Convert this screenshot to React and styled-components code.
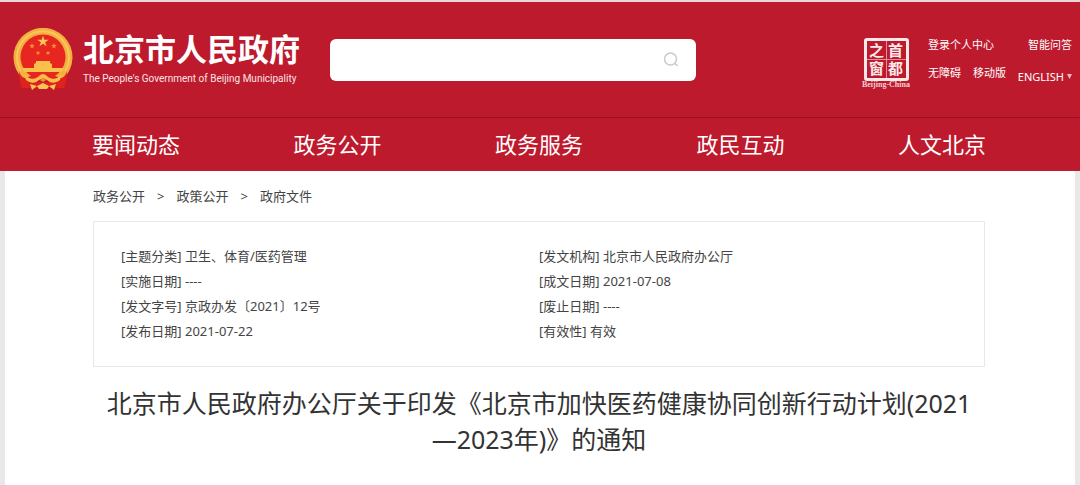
import styled, { createGlobalStyle } from "styled-components"

const navItems = ["要闻动态", "政务公开", "政务服务", "政民互动", "人文北京"]
const crumbs = ["政务公开", "政策公开", "政府文件"]

const infoColumns = [
    [
        { label: "主题分类", value: "卫生、体育/医药管理" },
        { label: "实施日期", value: "----" },
        { label: "发文字号", value: "京政办发〔2021〕12号" },
        { label: "发布日期", value: "2021-07-22" },
    ],
    [
        { label: "发文机构", value: "北京市人民政府办公厅" },
        { label: "成文日期", value: "2021-07-08" },
        { label: "废止日期", value: "----" },
        { label: "有效性", value: "有效" },
    ],
]

const starPoints = (cx, cy, r) => {
    const points = []
    for (let i = 0; i < 10; i++) {
        const radius = i % 2 === 0 ? r : r * 0.38
        const angle = (Math.PI / 5) * i - Math.PI / 2
        points.push(`${(cx + radius * Math.cos(angle)).toFixed(2)},${(cy + radius * Math.sin(angle)).toFixed(2)}`)
    }
    return points.join(" ")
}

function Emblem(){
    return(
        <svg width="62" height="64" viewBox="0 0 62 64" aria-hidden="true">
            {/* 麦穗圈 */}
            <circle cx="31" cy="29" r="24" fill="#e6261f" />
            <path d="M11 51 A29.5 29.5 0 1 1 51 51 L43 48 A22.5 22.5 0 1 0 19 48 Z" fill="#f3b03f" />
            <path d="M9 43 A26 26 0 1 1 53 43" fill="none" stroke="#f9c65c" strokeWidth="2" />
            <polygon points={starPoints(31, 13.5, 6)} fill="#fbc552" />
            <polygon points={starPoints(20, 18, 3)} fill="#f4953d" />
            <polygon points={starPoints(42, 18, 3)} fill="#f4953d" />
            <polygon points={starPoints(26, 25, 2.6)} fill="#f4953d" />
            <polygon points={starPoints(36, 25, 2.6)} fill="#f4953d" />
            {/* 天安门 */}
            <path d="M24 33 L38 33 L38 35 L40 36 L40 40 L52 40 L50 44 L12 44 L10 40 L22 40 L22 36 L24 35 Z" fill="#f9c04c" />
            {/* 红绸 */}
            <path d="M7 43 C8 48 12 51 17 51 L19 60 L10 60 C8 55 7 50 7 43 Z" fill="#df221e" />
            <path d="M55 43 C54 48 50 51 45 51 L43 60 L52 60 C54 55 55 50 55 43 Z" fill="#df221e" />
            <path d="M17 54 H45 L42 60 H20 Z" fill="#df221e" />
            {/* 齿轮 */}
            <path d="M12 46 C18 52 23 52 27 48 Q31 44 35 48 C39 52 44 52 50 46 L48 52 C43 56 38 55 35 52 Q31 49 27 52 C24 55 19 56 14 52 Z" fill="#f8bd4a" />
            <path d="M28 52 Q31 49 34 52 L31 54 Z" fill="#ef8e35" />
            <path d="M18 56 L25 58 L20 62 Z M44 56 L37 58 L42 62 Z M25 58 L31 55 L37 58 L35 61 L27 61 Z" fill="#fbc653" />
        </svg>
    )
}

export default function App(){
    return(
        <>
            <GlobalStyle />
            <Page>
                <Header>
                    <Brand href="#">
                        <Emblem />
                        <BrandText>
                            <BrandName>北京市人民政府</BrandName>
                            <BrandSub>The People's Government of Beijing Municipality</BrandSub>
                        </BrandText>
                    </Brand>
                    <Search onSubmit={(e)=>e.preventDefault()}>
                        <input type="text" aria-label="搜索" />
                        <button type="submit" aria-label="搜索">
                            <svg width="18" height="18" viewBox="0 0 18 18" fill="none" stroke="#c9c9c9" strokeWidth="1.5" strokeLinecap="round">
                                <circle cx="8.5" cy="8" r="6" />
                                <path d="M12.5 12.5 L15.5 14.5" />
                            </svg>
                        </button>
                    </Search>
                    <Capital href="#">
                        <Seal>
                            <span>之</span>
                            <span>首</span>
                            <span>窗</span>
                            <span>都</span>
                        </Seal>
                        <SealCaption>Beijing-China</SealCaption>
                    </Capital>
                    <Tools>
                        <ToolRow>
                            <a href="#">登录个人中心</a>
                            <a href="#">智能问答</a>
                        </ToolRow>
                        <ToolRow>
                            <ToolGroup>
                                <a href="#">无障碍</a>
                                <a href="#">移动版</a>
                            </ToolGroup>
                            <Language type="button">
                                ENGLISH
                                <svg width="5" height="5" viewBox="0 0 5 5"><path d="M0 0 H5 L2.5 5 Z" fill="#f3b9bf" /></svg>
                            </Language>
                        </ToolRow>
                    </Tools>
                </Header>
                <Nav>
                    {navItems.map((item)=>(
                        <a key={item} href="#">{item}</a>
                    ))}
                </Nav>
                <Content>
                    <Breadcrumb>
                        {crumbs.map((crumb,index)=>(
                            <li key={crumb}>
                                {index > 0 && <span>&gt;</span>}
                                <a href="#">{crumb}</a>
                            </li>
                        ))}
                    </Breadcrumb>
                    <InfoBox>
                        {infoColumns.map((column,index)=>(
                            <InfoList key={index}>
                                {column.map((info)=>(
                                    <li key={info.label}>[{info.label}] {info.value}</li>
                                ))}
                            </InfoList>
                        ))}
                    </InfoBox>
                    <Title>北京市人民政府办公厅关于印发《北京市加快医药健康协同创新行动计划(2021—2023年)》的通知</Title>
                </Content>
            </Page>
        </>
    )
}

const GlobalStyle = createGlobalStyle`
    *{
        box-sizing: border-box;
    }
    body{
        margin: 0;
        background: #fff;
        font-family: "Noto Sans", "Noto Sans CJK SC", sans-serif;
        color: #444;
    }
    a{
        color: inherit;
        text-decoration: none;
    }
    ul, ol{
        list-style: none;
        margin: 0;
        padding: 0;
    }
`

const Page = styled.div`
    display: flex;
    flex-direction: column;
    min-height: 100vh;
    border-top: 2px solid #ecd5d6;
`

const Header = styled.header`
    display: flex;
    align-items: center;
    height: 115px;
    padding: 0 8px 0 12px;
    background: #bd1a2d;
    color: #fff;
`

const Brand = styled.a`
    display: flex;
    align-items: center;
    gap: 9px;
    flex: 0 0 318px;
`

const BrandText = styled.div`
    display: flex;
    flex-direction: column;
    gap: 4px;
    padding-bottom: 2px;
    white-space: nowrap;
`

const BrandName = styled.strong`
    font-size: 31px;
    line-height: 36px;
    font-weight: 700;
`

const BrandSub = styled.span`
    font-family: Roboto, "Noto Sans", sans-serif;
    font-size: 10px;
    line-height: 16px;
    color: #fbe4e6;
`

const Search = styled.form`
    display: flex;
    flex: 1 1 366px;
    height: 42px;
    min-width: 0;
    border-radius: 6px;
    background: #fff;
    overflow: hidden;
    input{
        flex: 1;
        min-width: 0;
        border: 0;
        padding: 0 12px;
        font-size: 14px;
        outline: none;
        background: transparent;
    }
    button{
        display: flex;
        align-items: center;
        justify-content: center;
        width: 50px;
        padding: 0;
        border: 0;
        background: transparent;
        cursor: pointer;
    }
`

const Capital = styled.a`
    display: flex;
    flex-direction: column;
    align-items: center;
    width: 50px;
    margin: 7px 17px 0 165px;
`

const Seal = styled.div`
    display: grid;
    grid-template-columns: 1fr 1fr;
    gap: 1px;
    width: 45px;
    height: 43px;
    padding: 1px;
    border: 3px solid #fbe9ea;
    border-radius: 3px;
    background: linear-gradient(#e58f98, #e58f98) center / 1px 100% no-repeat,
        linear-gradient(#e58f98, #e58f98) center / 100% 1px no-repeat;
    span{
        display: flex;
        align-items: center;
        justify-content: center;
        font-size: 15px;
        line-height: 16px;
        font-weight: 700;
        color: #fbe9ea;
    }
`

const SealCaption = styled.span`
    font-family: "Liberation Serif", serif;
    font-size: 8px;
    line-height: 8px;
    font-weight: 700;
    white-space: nowrap;
    color: #f6cfd3;
`

const Tools = styled.div`
    display: flex;
    flex-direction: column;
    gap: 12px;
    flex: 0 0 144px;
    padding-top: 2px;
    font-size: 11px;
    line-height: 16px;
`

const ToolRow = styled.div`
    display: flex;
    justify-content: space-between;
    white-space: nowrap;
`

const ToolGroup = styled.div`
    display: flex;
    gap: 12px;
`

const Language = styled.button`
    display: flex;
    align-items: center;
    gap: 3px;
    padding: 4px 0 0;
    border: 0;
    background: transparent;
    font: inherit;
    color: inherit;
    cursor: pointer;
`

const Nav = styled.nav`
    display: flex;
    justify-content: space-between;
    padding: 0 94px 0 92px;
    border-top: 1px solid #9d1122;
    background: #bd1a2d;
    color: #fff;
    font-size: 22px;
    line-height: 53px;
`

const Content = styled.main`
    flex: 1;
    padding: 14px 90px 30px 88px;
    border: solid #e8e8e8;
    border-width: 0 5px;
`

const Breadcrumb = styled.ol`
    display: flex;
    font-size: 13px;
    line-height: 22px;
    span{
        margin: 0 12px;
    }
`

const InfoBox = styled.section`
    display: grid;
    grid-template-columns: 418px 1fr;
    margin-top: 14px;
    padding: 22px 27px;
    border: 1px solid #e8e8e8;
`

const InfoList = styled.ul`
    font-size: 13px;
    line-height: 25px;
`

const Title = styled.h1`
    margin: 18px 0 0;
    padding: 0 12px;
    font-size: 25px;
    line-height: 36px;
    font-weight: 400;
    text-align: center;
    color: #333;
`
